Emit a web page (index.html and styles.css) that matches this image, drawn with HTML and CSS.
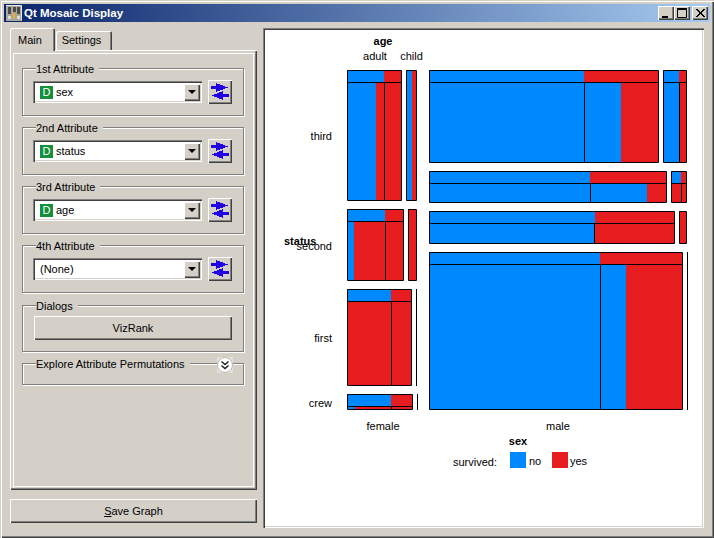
FILE: index.html

```html
<!DOCTYPE html>
<html lang="en">
<head>
  <meta charset="UTF-8">
  <title>Qt Mosaic Display</title>
  <link rel="stylesheet" href="styles.css">
</head>
<body>
  <div class="window">
    <div class="titlebar">
      <svg class="app-icon" width="16" height="16" viewBox="0 0 16 16">
        <rect width="16" height="16" fill="#a9a69e"/>
        <path d="M0 .5H15.500V15.500" fill="none" stroke="#e8e6e0"/>
        <rect x="2" y="2" width="3" height="7" fill="#4a4a48"/>
        <rect x="7" y="2" width="3" height="5" fill="#4a4a48"/>
        <rect x="11" y="2" width="3" height="7" fill="#4a4a48"/>
        <rect x="7" y="8" width="2" height="5" fill="#f0b020"/>
        <rect x="2" y="11" width="3" height="3" fill="#dddbd4"/>
        <rect x="11" y="11" width="3" height="3" fill="#dddbd4"/>
      </svg>
      <span class="title-text">Qt Mosaic Display</span>
      <div class="title-buttons">
        <div class="title-btn"><svg width="16" height="14"><rect x="4" y="10" width="6" height="2" fill="#000"/></svg></div>
        <div class="title-btn"><svg width="16" height="14"><path d="M3.500 3.500H12.500V11.500H3.500Z M3 2.500H13" fill="none" stroke="#000"/></svg></div>
        <div class="title-btn close-btn"><svg width="16" height="14"><path d="M4 3L12 11M5 3L13 11M12 3L4 11M13 3L5 11" fill="none" stroke="#000"/></svg></div>
      </div>
    </div>

    <div class="content">
      <div class="side">
        <div class="tabs">
          <div class="tab tab-active">Main</div>
          <div class="tab">Settings</div>
        </div>
        <div class="pane">
          <div class="group">
            <div class="group-title">1st Attribute</div>
            <div class="attr-row">
              <div class="combo">
                <span class="badge">D</span><span class="combo-text">sex</span>
                <span class="combo-arrow"><span class="tri"></span></span>
              </div>
              <div class="swap-btn">
                <svg width="18" height="18" viewBox="0 0 18 18"><path class="swap" d="M0 3H5V0L17 4.500L5 9V6H0Z M18 11H12V8L1 12.500L12 17V14H18Z"/></svg>
              </div>
            </div>
          </div>
          <div class="group">
            <div class="group-title">2nd Attribute</div>
            <div class="attr-row">
              <div class="combo">
                <span class="badge">D</span><span class="combo-text">status</span>
                <span class="combo-arrow"><span class="tri"></span></span>
              </div>
              <div class="swap-btn">
                <svg width="18" height="18" viewBox="0 0 18 18"><path class="swap" d="M0 3H5V0L17 4.500L5 9V6H0Z M18 11H12V8L1 12.500L12 17V14H18Z"/></svg>
              </div>
            </div>
          </div>
          <div class="group">
            <div class="group-title">3rd Attribute</div>
            <div class="attr-row">
              <div class="combo">
                <span class="badge">D</span><span class="combo-text">age</span>
                <span class="combo-arrow"><span class="tri"></span></span>
              </div>
              <div class="swap-btn">
                <svg width="18" height="18" viewBox="0 0 18 18"><path class="swap" d="M0 3H5V0L17 4.500L5 9V6H0Z M18 11H12V8L1 12.500L12 17V14H18Z"/></svg>
              </div>
            </div>
          </div>
          <div class="group group-last">
            <div class="group-title">4th Attribute</div>
            <div class="attr-row">
              <div class="combo">
                <span class="combo-none">(None)</span>
                <span class="combo-arrow"><span class="tri"></span></span>
              </div>
              <div class="swap-btn">
                <svg width="18" height="18" viewBox="0 0 18 18"><path class="swap" d="M0 3H5V0L17 4.500L5 9V6H0Z M18 11H12V8L1 12.500L12 17V14H18Z"/></svg>
              </div>
            </div>
          </div>
          <div class="group group-dialogs">
            <div class="group-title">Dialogs</div>
            <div class="push-btn">VizRank</div>
          </div>
          <div class="group group-explore">
            <div class="group-title">Explore Attribute Permutations</div>
            <svg class="toggle" width="16" height="16" viewBox="0 0 16 16">
              <rect width="16" height="16" fill="#e4e2dc"/>
              <circle cx="8" cy="8" r="7.500" fill="#fff" stroke="#b8b6b0"/>
              <path d="M4.500 4.500L8 7.500L11.500 4.500M4.500 8.500L8 11.500L11.500 8.500" fill="none" stroke="#222" stroke-width="1.500"/>
            </svg>
          </div>
        </div>
        <div class="push-btn save-btn"><span><u>S</u>ave Graph</span></div>
      </div>

      <div class="plot">
        <svg class="mosaic" width="437" height="496" viewBox="265 30 437 496">
          <!-- female, third -->
          <rect class="yes" x="347" y="70" width="54" height="130"/>
          <rect class="no" x="347" y="70" width="37" height="12"/>
          <rect class="no" x="347" y="82" width="29" height="118"/>
          <path class="line" d="M347.500 70.500H401.500V200.500H347.500Z M347 82.500H401 M384.500 82V200"/>
          <rect class="yes" x="406" y="70" width="10" height="130"/>
          <rect class="no" x="406" y="70" width="6" height="130"/>
          <path class="line" d="M406.500 70.500H416.500V200.500H406.500Z"/>

          <!-- male, third -->
          <rect class="yes" x="429" y="70" width="229" height="92"/>
          <rect class="no" x="429" y="70" width="155" height="12"/>
          <rect class="no" x="429" y="82" width="192" height="80"/>
          <path class="line" d="M429.500 70.500H658.500V162.500H429.500Z M429 82.500H658 M584.500 82V162"/>
          <rect class="yes" x="663" y="70" width="23" height="92"/>
          <rect class="no" x="663" y="70" width="16" height="92"/>
          <path class="line" d="M663.500 70.500H686.500V162.500H663.500Z M663 82.500H686 M679.500 82V162"/>

          <rect class="yes" x="429" y="171" width="237" height="31"/>
          <rect class="no" x="429" y="171" width="161" height="12"/>
          <rect class="no" x="429" y="183" width="218" height="19"/>
          <path class="line" d="M429.500 171.500H666.500V202.500H429.500Z M429 183.500H666 M590.500 183V202"/>
          <rect class="yes" x="671" y="171" width="15" height="31"/>
          <rect class="no" x="671" y="171" width="10" height="12"/>
          <path class="line" d="M671.500 171.500H686.500V202.500H671.500Z M671 183.500H686 M681.500 183V202"/>

          <!-- male, second -->
          <rect class="yes" x="429" y="211" width="245" height="32"/>
          <rect class="no" x="429" y="211" width="166" height="12"/>
          <rect class="no" x="429" y="223" width="165" height="20"/>
          <path class="line" d="M429.500 211.500H674.500V243.500H429.500Z M429 223.500H674 M594.500 223V243"/>
          <rect class="yes" x="679" y="211" width="7" height="32"/>
          <path class="line" d="M679.500 211.500H686.500V243.500H679.500Z"/>

          <!-- male, first and crew -->
          <rect class="yes" x="429" y="252" width="253" height="157"/>
          <rect class="no" x="429" y="252" width="171" height="12"/>
          <rect class="no" x="429" y="264" width="197" height="145"/>
          <path class="line" d="M429.500 252.500H682.500V409.500H429.500Z M429 264.500H682 M600.500 264V409 M687.500 252V410"/>

          <!-- female, second -->
          <rect class="yes" x="347" y="209" width="56" height="71"/>
          <rect class="no" x="347" y="209" width="38" height="12"/>
          <rect class="no" x="347" y="221" width="7" height="59"/>
          <path class="line" d="M347.500 209.500H403.500V280.500H347.500Z M347 221.500H403 M385.500 221V280"/>
          <rect class="yes" x="408" y="209" width="8" height="71"/>
          <path class="line" d="M408.500 209.500H416.500V280.500H408.500Z"/>

          <!-- female, first -->
          <rect class="yes" x="347" y="289" width="64" height="96"/>
          <rect class="no" x="347" y="289" width="44" height="12"/>
          <path class="line" d="M347.500 289.500H411.500V385.500H347.500Z M347 301.500H411 M391.500 301V385 M416.500 289V386"/>

          <!-- female, crew -->
          <rect class="yes" x="347" y="394" width="65" height="15"/>
          <rect class="no" x="347" y="394" width="44" height="12"/>
          <rect class="no" x="347" y="406" width="8" height="3"/>
          <path class="line" d="M347.500 394.500H412.500V409.500H347.500Z M347 406.500H412 M391.500 406V409 M417.500 394V410"/>

          <text class="bold mid" x="383" y="45">age</text>
          <text class="mid" x="375" y="60">adult</text>
          <text class="mid" x="411.500" y="60">child</text>
          <text class="end" x="332" y="140">third</text>
          <text class="bold" x="284" y="245">status</text>
          <text class="end" x="332" y="250">second</text>
          <text class="end" x="332" y="342">first</text>
          <text class="end" x="332" y="407">crew</text>
          <text class="mid" x="383" y="430">female</text>
          <text class="mid" x="558" y="430">male</text>
          <text class="bold mid" x="518" y="445">sex</text>
          <text x="453" y="466">survived:</text>
          <rect class="no" x="510" y="452" width="16" height="16"/>
          <text x="529" y="465">no</text>
          <rect class="yes" x="552" y="452" width="16" height="16"/>
          <text x="570" y="465">yes</text>
        </svg>
      </div>
    </div>
  </div>
</body>
</html>
```

FILE: styles.css

```css
* { box-sizing: border-box; }
html, body { margin: 0; padding: 0; }
body { font-family: "Liberation Sans", Arial, sans-serif; font-size: 11px; color: #000; overflow: hidden; }

.window {
  width: 714px; height: 538px; padding: 4px; background: #d4d0c8;
  display: flex; flex-direction: column;
  box-shadow: inset 1px 1px 0 #d4d0c8, inset 2px 2px 0 #fff, inset -1px -1px 0 #404040, inset -2px -2px 0 #808080;
}

.titlebar {
  height: 18px; display: flex; align-items: center; padding: 0 2px 0 2px;
  background: linear-gradient(to right, #0a246a, #a6caf0);
}
.app-icon { margin-right: 2px; flex: none; }
.title-text { color: #fff; font-weight: bold; font-size: 11.5px; flex: 1; }
.title-buttons { display: flex; }
.title-btn {
  width: 16px; height: 14px; background: #d4d0c8; display: flex;
  box-shadow: inset 1px 1px 0 #fff, inset -1px -1px 0 #404040, inset -2px -2px 0 #808080;
}
.close-btn { margin-left: 2px; }

.content { flex: 1; display: flex; gap: 6px; padding: 6px; }
.side { width: 247px; display: flex; flex-direction: column; }

.tabs { height: 22px; display: flex; align-items: flex-end; }
.tab {
  height: 19px; width: 56px; padding: 3px 5px 0 0; text-align: center; background: #d4d0c8;
  border-radius: 2px 2px 0 0; margin-left: 1px;
  box-shadow: inset 1px 1px 0 #fff, inset -1px 0 0 #404040, inset -2px 0 0 #808080;
}
.tab-active {
  height: 23px; width: 45px; margin-left: 0; margin-bottom: -1px; padding-top: 6px; position: relative;
}

.pane {
  height: 440px; padding: 18px 13px 0 12px;
  box-shadow: inset 1px 1px 0 #fff, inset -1px -1px 0 #404040, inset -2px -2px 0 #808080, inset 3px 3px 0 #d4d0c8, inset 4px 4px 0 #fff, inset -3px -3px 0 #d4d0c8, inset -4px -4px 0 #fff;
}

.group {
  position: relative; height: 48px; margin-bottom: 11px; padding: 0 11px 0 10px;
  border: 1px solid #808080; box-shadow: inset 1px 1px 0 #fff, 1px 1px 0 #fff;
}
.group-title {
  width: fit-content; height: 13px; margin: -6px 0 0 3px; padding: 0 5px 0 0;
  background: #d4d0c8; line-height: 13px; position: relative;
}
.group-last { margin-bottom: 12px; }
.group-dialogs { height: 47px; margin-bottom: 11px; }
.group-explore { height: 22px; margin: 0; }
.toggle { position: absolute; right: 10px; top: -7px; }

.attr-row { display: flex; align-items: center; gap: 6px; height: 24px; margin-top: 4px; }

.combo {
  width: 169px; height: 22px; background: #fff; display: flex; align-items: center; padding: 0 2px 0 7px;
  box-shadow: inset 1px 1px 0 #808080, inset 2px 2px 0 #404040, inset -1px -1px 0 #fff, inset -2px -2px 0 #d4d0c8;
}
.badge {
  width: 13px; height: 13px; background: #14903c; color: #fff; text-align: center; line-height: 13px;
  margin-right: 3px; flex: none;
}
.combo-text, .combo-none { flex: 1; }
.combo-arrow {
  width: 16px; height: 17px; background: #d4d0c8; display: flex; align-items: center; justify-content: center;
  box-shadow: inset 1px 1px 0 #fff, inset -1px -1px 0 #404040, inset -2px -2px 0 #808080;
}
.tri { width: 0; height: 0; border: 4px solid transparent; border-top-color: #000; border-bottom: 0; }

.swap-btn {
  width: 24px; height: 24px; background: #d4d0c8; display: flex; align-items: center; justify-content: center;
  box-shadow: inset 1px 1px 0 #fff, inset -1px -1px 0 #404040, inset -2px -2px 0 #808080;
}
.swap { fill: #2200e6; shape-rendering: crispEdges; }

.push-btn {
  height: 24px; display: flex; align-items: center; justify-content: center; background: #d4d0c8;
  box-shadow: inset 1px 1px 0 #fff, inset -1px -1px 0 #404040, inset -2px -2px 0 #808080;
}
.group-dialogs .push-btn { width: 198px; margin: 3px 0 0 1px; }
.save-btn { margin-top: 9px; }

.plot {
  flex: 1; height: 500px; padding: 2px; background: #fff;
  box-shadow: inset 1px 1px 0 #808080, inset 2px 2px 0 #404040, inset -1px -1px 0 #fff, inset -2px -2px 0 #d4d0c8;
}
.mosaic { display: block; }
.mosaic text { font-family: "Liberation Sans", Arial, sans-serif; font-size: 11px; fill: #000; }
.mosaic text.bold { font-weight: bold; }
.mosaic text.mid { text-anchor: middle; }
.mosaic text.end { text-anchor: end; }
.no { fill: #0088ff; }
.yes { fill: #e61c1e; }
.line { fill: none; stroke: #000; }
```
